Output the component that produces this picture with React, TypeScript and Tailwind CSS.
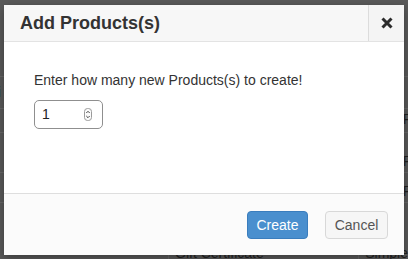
import React from "react";

function Spinner() {
  return (
    <svg width="8" height="13" viewBox="0 0 8 13" className="block">
      <rect x="0.5" y="0.5" width="7" height="12" rx="3" fill="#fafafa" stroke="#9a9a9a" strokeWidth="1" />
      <path d="M2.3 5 L4 3.3 L5.7 5" fill="none" stroke="#444" strokeWidth="1" />
      <path d="M2.3 8 L4 9.7 L5.7 8" fill="none" stroke="#444" strokeWidth="1" />
    </svg>
  );
}

function CloseIcon() {
  return (
    <svg width="12" height="12" viewBox="0 0 12 12" className="block">
      <path d="M1.5 1.5 L10.5 10.5 M10.5 1.5 L1.5 10.5" stroke="#2b2b2b" strokeWidth="3" strokeLinecap="butt" />
    </svg>
  );
}

export default function App() {
  return (
    <div className="relative w-[408px] h-[259px] overflow-hidden bg-[#5a5a5a] font-['Liberation_Sans',Arial,sans-serif]">
      {/* backdrop page (dimmed) */}
      <div className="flex flex-col">
        <div className="h-[77px] border-b border-[#686868]" />
        <div className="h-[32px] border-b border-[#686868] flex items-center">
          <span className="ml-[-2px] text-[14px] text-[#2c4a5e]">i</span>
        </div>
        <div className="h-[24px] border-b border-[#686868] flex justify-end">
          <span className="mr-[-4px] text-[14px] text-[#222]">P</span>
        </div>
        <div className="h-[40px] border-b border-[#686868] flex justify-end items-end">
          <span className="mr-[-4px] text-[14px] text-[#222]">P</span>
        </div>
        <div className="h-[30px] border-b border-[#686868] flex justify-end items-end">
          <span className="mr-[-4px] text-[14px] text-[#222]">P</span>
        </div>
        <div className="h-[60px] flex text-[14px] text-[#222] leading-[20px]">
          <div className="w-[177px]" />
          <div className="w-[201px] border-x border-[#686868] pl-[6px] pt-[40px]">Gift Certificate</div>
          <div className="pl-[6px] pt-[40px]">Simple</div>
        </div>
      </div>

      {/* modal */}
      <div className="absolute left-[4px] top-[5px] w-[400px] h-[250px] bg-white flex flex-col shadow-[0_3px_9px_rgba(0,0,0,0.35)]">
        <div className="h-[37px] shrink-0 bg-[#f7f7f7] border-b border-[#e3e3e3] flex items-stretch justify-between">
          <div className="pl-[16px] flex items-center text-[18px] font-bold text-[#333] leading-none">
            Add Products(s)
          </div>
          <div className="w-[36px] bg-[#f4f4f4] border-l border-[#dcdcdc] flex items-center justify-center">
            <CloseIcon />
          </div>
        </div>

        <div className="flex-1 pl-[30px] pt-[28px]">
          <div className="text-[14px] leading-[20px] text-[#333]">Enter how many new Products(s) to create!</div>
          <div className="mt-[10px] w-[69px] h-[29px] rounded-[5px] border border-[#8f8f8f] bg-white flex items-center justify-between pl-[7px] pr-[10px]">
            <span className="text-[14px] text-[#222]">1</span>
            <Spinner />
          </div>
        </div>

        <div className="h-[62px] shrink-0 bg-[#fbfbfb] border-t border-[#dedede] flex items-center justify-end pr-[16px]">
          <button className="w-[61px] h-[28px] rounded-[4px] bg-[#4a8fce] border border-[#3a7dbd] text-white text-[14px] leading-none">
            Create
          </button>
          <button className="ml-[17px] w-[63px] h-[28px] rounded-[4px] bg-[#f6f6f6] border border-[#d8d8d8] text-[#555] text-[14px] leading-none">
            Cancel
          </button>
        </div>
      </div>
    </div>
  );
}
